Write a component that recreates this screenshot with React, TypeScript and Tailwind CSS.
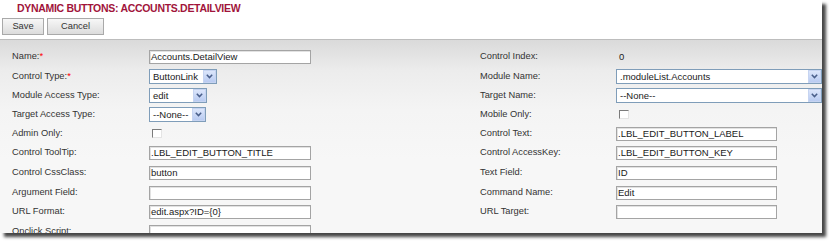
import React from "react";

const font = { fontFamily: '"Liberation Sans", Arial, sans-serif' };

function TextBox({ value = "", w = 162 }: { value?: string; w?: number }) {
  return (
    <div
      className="h-[14px] border border-[#a4a4a4] bg-white px-[1px] flex items-center text-[9.5px] leading-none text-[#1a1a1a] whitespace-nowrap overflow-hidden shadow-[inset_1px_1px_0_#e2e2e2]"
      style={{ width: w }}
    >
      {value}
    </div>
  );
}

function Arrow() {
  return (
    <div className="w-[13px] h-[13px] shrink-0 bg-gradient-to-b from-[#dce6fb] to-[#b9cbf1] border border-[#c6d4f1] flex items-center justify-center">
      <svg width="7" height="5" viewBox="0 0 7 5">
        <path d="M0.8 0.8 L3.5 3.6 L6.2 0.8" fill="none" stroke="#4a5f8a" strokeWidth="1.5" />
      </svg>
    </div>
  );
}

function Select({ value, w }: { value: string; w: number }) {
  return (
    <div
      className="h-[15px] border border-[#7f9db9] bg-white flex items-center justify-between pl-[3px] text-[9.5px] leading-none text-[#1a1a1a] whitespace-nowrap shrink-0"
      style={{ width: w }}
    >
      <span>{value}</span>
      <Arrow />
    </div>
  );
}

function Check() {
  return (
    <div className="ml-[3px] w-[10px] h-[9px] bg-white border-t border-l border-[#7b7b7b] border-r-[#e4e4e4] border-b-[#e4e4e4] border-r border-b" />
  );
}

function Label({ text, req }: { text: string; req?: boolean }) {
  return (
    <div className="flex items-center text-[9.3px] leading-none text-[#333333] whitespace-nowrap">
      {text}
      {req && <span className="text-[#ff0000]">*</span>}
    </div>
  );
}

export default function App() {
  return (
    <div className="w-[829px] h-[241px] bg-white" style={font}>
      <div className="w-[822px] h-[233px] bg-white overflow-hidden flex flex-col shadow-[4px_4px_3px_rgba(0,0,0,0.72)]">
        <div className="shrink-0 h-[18px] pl-[17px] pt-[2px] text-[10.5px] tracking-[-0.3px] leading-[12px] font-bold text-[#a1143b] whitespace-nowrap">
          DYNAMIC BUTTONS: ACCOUNTS.DETAILVIEW
        </div>
        <div className="shrink-0 flex gap-[3px] pl-[2px] h-[21px]">
          <button className="w-[42px] h-[17px] border border-[#a9a9a9] bg-gradient-to-b from-[#f7f7f7] to-[#dcdcdc] text-[9.3px] leading-none text-[#333]">
            Save
          </button>
          <button className="w-[57px] h-[17px] border border-[#a9a9a9] bg-gradient-to-b from-[#f7f7f7] to-[#dcdcdc] text-[9.3px] leading-none text-[#333]">
            Cancel
          </button>
        </div>
        <div className="flex-1 min-h-0 overflow-hidden border-t border-[#bdbdbd] bg-[linear-gradient(to_bottom,#dadada_0px,#ececec_30px,#f4f4f4_70px,#f7f7f7_120px)] pt-[6px] pl-[12px]">
          <div className="grid grid-cols-[137px_331px_136px_206px] grid-rows-[21px_19px_19px_19px_19px_20px_20px_19px_20px_20px] items-center">
            <Label text="Name:" req />
            <TextBox value="Accounts.DetailView" />
            <Label text="Control Index:" />
            <div className="pl-[3px] text-[9.5px] leading-none text-[#222]">0</div>

            <Label text="Control Type:" req />
            <Select value="ButtonLink" w={68} />
            <Label text="Module Name:" />
            <Select value=".moduleList.Accounts" w={206} />

            <Label text="Module Access Type:" />
            <Select value="edit" w={58} />
            <Label text="Target Name:" />
            <Select value="--None--" w={206} />

            <Label text="Target Access Type:" />
            <Select value="--None--" w={57} />
            <Label text="Mobile Only:" />
            <Check />

            <Label text="Admin Only:" />
            <Check />
            <Label text="Control Text:" />
            <TextBox value=".LBL_EDIT_BUTTON_LABEL" w={161} />

            <Label text="Control ToolTip:" />
            <TextBox value=".LBL_EDIT_BUTTON_TITLE" />
            <Label text="Control AccessKey:" />
            <TextBox value=".LBL_EDIT_BUTTON_KEY" w={161} />

            <Label text="Control CssClass:" />
            <TextBox value="button" />
            <Label text="Text Field:" />
            <TextBox value="ID" w={161} />

            <Label text="Argument Field:" />
            <TextBox value="" />
            <Label text="Command Name:" />
            <TextBox value="Edit" w={161} />

            <Label text="URL Format:" />
            <TextBox value="edit.aspx?ID={0}" />
            <Label text="URL Target:" />
            <TextBox value="" w={161} />

            <Label text="Onclick Script:" />
            <TextBox value="" />
            <div />
            <div />
          </div>
        </div>
      </div>
    </div>
  );
}
